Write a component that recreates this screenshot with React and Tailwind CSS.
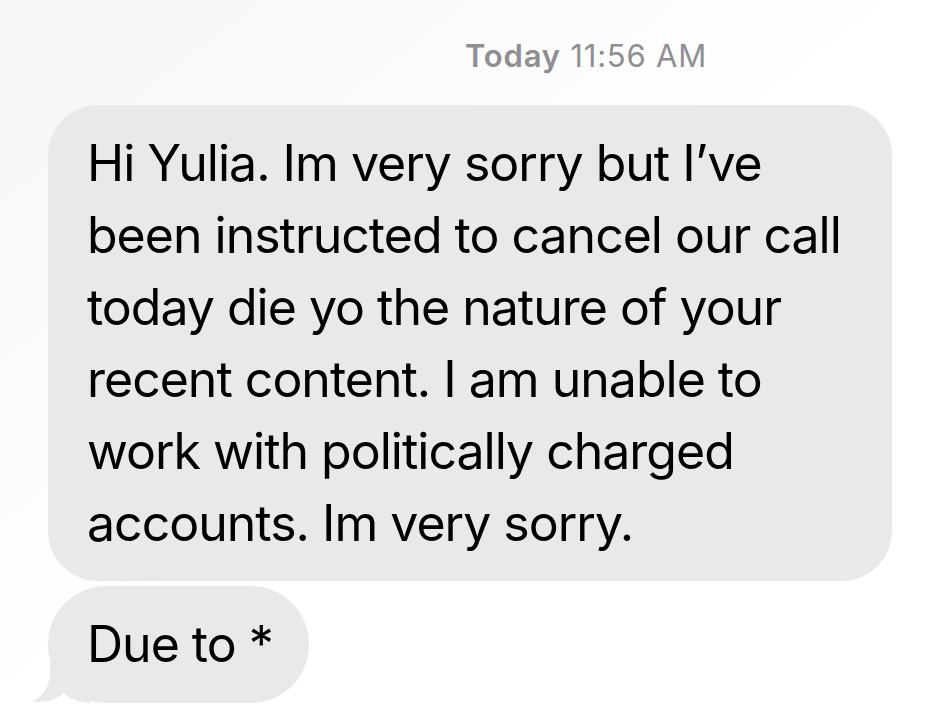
import React from "react";

const lines = [
  "Hi Yulia. Im very sorry but I\u2019ve",
  "been instructed to cancel our call",
  "today die yo the nature of your",
  "recent content. I am unable to",
  "work with politically charged",
  "accounts. Im very sorry.",
];

function Tail() {
  // iMessage-style tail at the bottom-left of the last received bubble
  return (
    <svg
      className="absolute left-[-18px] bottom-0"
      width="60"
      height="40"
      viewBox="0 0 60 40"
    >
      <path
        d="M20 0 L20 10 C20 22 14 32 2 39 C14 40 26 37 34 30 C40 36 50 40 60 40 L60 0 Z"
        fill="#e9e9eb"
      />
    </svg>
  );
}

export default function App() {
  return (
    <div
      className="w-[940px] h-[725px] overflow-hidden bg-white bg-gradient-to-br from-[#f6f6f6] via-white to-white text-black"
      style={{ fontFamily: "Inter, 'Liberation Sans', sans-serif" }}
    >
      {/* timestamp */}
      <div className="pt-[38px] pl-[465px] text-[31px] leading-[36px] text-[#8e8e93] tracking-[0.8px]">
        <span className="font-semibold">Today</span> 11:56 AM
      </div>

      <div className="pl-[48px] pt-[31px] flex flex-col items-start gap-[5px]">
        {/* long message */}
        <div className="w-[844px] rounded-[50px] bg-[#e9e9eb] pl-[39px] pt-[22px] pb-[22px] text-[50px] leading-[72px] tracking-[-1px]">
          {lines.map((l, i) => (
            <div key={i} className="whitespace-nowrap">{l}</div>
          ))}
        </div>

        {/* short message with tail */}
        <div className="relative">
          <Tail />
          <div className="relative rounded-[58px] bg-[#e9e9eb] pl-[39px] pr-[36px] pt-[22px] pb-[23px] text-[50px] leading-[72px] tracking-[-1px]">
            Due to *
          </div>
        </div>
      </div>
    </div>
  );
}
